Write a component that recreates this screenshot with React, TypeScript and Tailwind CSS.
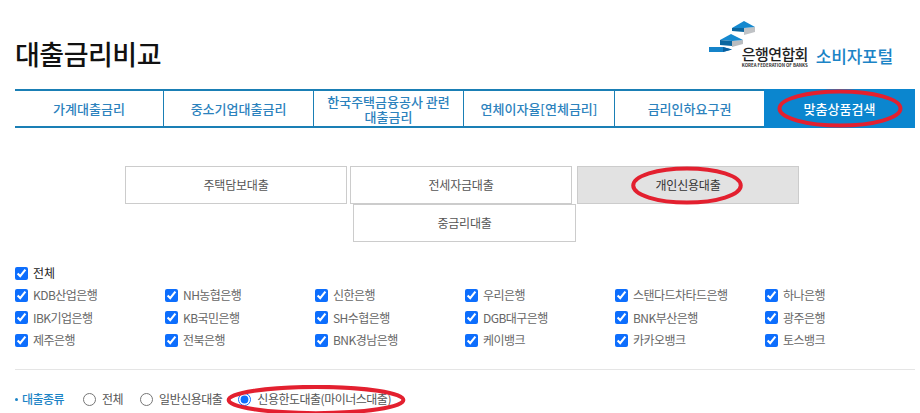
const tabs = [
  { label: "가계대출금리", w: "w-[148px]" },
  { label: "중소기업대출금리", w: "w-[150px]" },
  { label: "한국주택금융공사 관련\n대출금리", w: "w-[150px]" },
  { label: "연체이자율[연체금리]", w: "w-[151px]" },
  { label: "금리인하요구권", w: "w-[150px]" },
];

const banks = [
  "KDB산업은행", "NH농협은행", "신한은행", "우리은행", "스탠다드차타드은행", "하나은행",
  "IBK기업은행", "KB국민은행", "SH수협은행", "DGB대구은행", "BNK부산은행", "광주은행",
  "제주은행", "전북은행", "BNK경남은행", "케이뱅크", "카카오뱅크", "토스뱅크",
];

function RedOval({ className }: { className: string }) {
  return (
    <svg className={`absolute pointer-events-none ${className}`} viewBox="0 0 100 40" preserveAspectRatio="none">
      <ellipse cx="50" cy="20" rx="48" ry="17.5" fill="none" stroke="#e3202f" strokeWidth="4" vectorEffect="non-scaling-stroke" />
    </svg>
  );
}

function Logo() {
  return (
    <div className="flex items-end gap-[8px] mr-[22px] mb-[19px]">
      <div className="relative w-[100px] h-[48px]">
        <svg className="absolute left-0 -top-[2px]" width="60" height="40" viewBox="0 0 60 40">
          {/* bottom bar */}
          <path d="M1 27h14l9 2.5-9 2.5H1z" fill="#1583c9" />
          <path d="M15 27l9 2.5-9 2.5z" fill="#0b5f9e" />
          {/* middle step */}
          <path d="M24 21l11-1v4l-11 3z" fill="#b9bcbf" />
          <path d="M12 20l11-6 12 6-11 1z" fill="#1589cf" />
          <path d="M12 20l12 1v5l-12-1z" fill="#0b669f" />
          {/* top step */}
          <path d="M36 8l11-1v5l-11 3z" fill="#bfc2c5" />
          <path d="M24 8l12-7 11 6-11 1z" fill="#1589cf" />
          <path d="M24 8l12 0v4l-12-1z" fill="#0b669f" />
        </svg>
        <div className="absolute left-[34px] top-[23px] text-[15px] leading-[18px] font-medium text-[#222] tracking-[-0.6px] whitespace-nowrap">은행연합회</div>
        <div className="absolute left-[34px] top-[41px] text-[4.4px] leading-[5px] font-bold text-[#333] whitespace-nowrap">KOREA FEDERATION OF BANKS</div>
      </div>
      <div className="text-[17px] leading-[22px] font-medium text-[#1c84c6] mb-[3px] tracking-[-0.2px] whitespace-nowrap">소비자포털</div>
    </div>
  );
}

export default function App() {
  return (
    <div className="relative w-[920px] h-[413px] overflow-hidden bg-white pl-[15px] pr-[5px] font-['Noto_Sans_CJK_KR','Liberation_Sans',sans-serif]">
      <header className="flex items-end justify-between h-[89px]">
        <h1 className="text-[27px] leading-[36px] font-medium text-[#111] mb-[17px] tracking-[-0.5px]">대출금리비교</h1>
        <Logo />
      </header>

      <nav className="flex h-[39px] border-t-2 border-b-2 border-[#1a7fb5]">
        {tabs.map((t, i) => (
          <div
            key={t.label}
            className={`${t.w} flex items-center justify-center text-center whitespace-pre-line text-[13px] leading-[15px] font-medium text-[#2c82bd] ${i > 0 ? "border-l border-[#1a7fb5]" : ""}`}
          >
            {t.label}
          </div>
        ))}
        <div className="relative w-[151px] -my-[2px] flex items-center justify-center bg-[#0b86cf] text-[13px] font-medium text-white">
          맞춤상품검색
          <RedOval className="left-[13px] top-0 w-[126px] h-[39px]" />
        </div>
      </nav>

      <section className="mt-[38px] pl-[110px]">
        <div className="flex">
          <div className="w-[222px] h-[38px] flex items-center justify-center border border-[#ccc] text-[12px] text-[#555] tracking-[-0.2px]">주택담보대출</div>
          <div className="w-[222px] h-[38px] ml-[3px] flex items-center justify-center border border-[#ccc] text-[12px] text-[#555] tracking-[-0.2px]">전세자금대출</div>
          <div className="relative w-[222px] h-[38px] ml-[5px] flex items-center justify-center border border-[#ccc] bg-[#e2e2e2] text-[12px] text-[#333] tracking-[-0.2px]">
            개인신용대출
            <RedOval className="left-[53px] -top-[1px] w-[112px] h-[39px]" />
          </div>
        </div>
        <div className="w-[223px] h-[38px] ml-[228px] flex items-center justify-center border border-[#ccc] text-[12px] text-[#555] tracking-[-0.2px]">중금리대출</div>
      </section>

      <section className="mt-[20px]">
        <label className="flex items-center gap-[5px] h-[22px] text-[12px] text-[#222]">
          <input type="checkbox" defaultChecked className="m-0 w-[13px] h-[13px] accent-[#0d6efd]" />
          전체
        </label>
        <div className="grid grid-cols-[150px_150px_150px_150px_150px_150px] grid-rows-[22px_23px_22px] items-center">
          {banks.map((b) => (
            <label key={b} className="flex items-center gap-[5px] text-[12px] leading-[16px] text-[#666] tracking-[-0.55px]">
              <input type="checkbox" defaultChecked className="m-0 w-[13px] h-[13px] accent-[#0d6efd]" />
              {b}
            </label>
          ))}
        </div>
      </section>

      <hr className="mt-[18px] border-t border-[#e5e5e5]" />

      <section className="flex items-center h-[22px] mt-[18px] text-[12px] text-[#555] tracking-[-0.5px]">
        <span className="w-[3px] h-[3px] rounded-full bg-[#1c84c6] mr-[4px]" />
        <span className="font-medium text-[#1c84c6] w-[44px]">대출종류</span>
        <label className="flex items-center gap-[6px] ml-[17px]">
          <input type="radio" name="kind" className="m-0 w-[13px] h-[13px]" />
          전체
        </label>
        <label className="flex items-center gap-[6px] ml-[17px]">
          <input type="radio" name="kind" className="m-0 w-[13px] h-[13px]" />
          일반신용대출
        </label>
        <label className="relative flex items-center gap-[6px] ml-[16px]">
          <input type="radio" name="kind" defaultChecked className="m-0 w-[13px] h-[13px] accent-[#0d6efd]" />
          신용한도대출(마이너스대출)
          <RedOval className="-left-[13px] -top-[5px] w-[182px] h-[30px]" />
        </label>
      </section>
    </div>
  );
}
